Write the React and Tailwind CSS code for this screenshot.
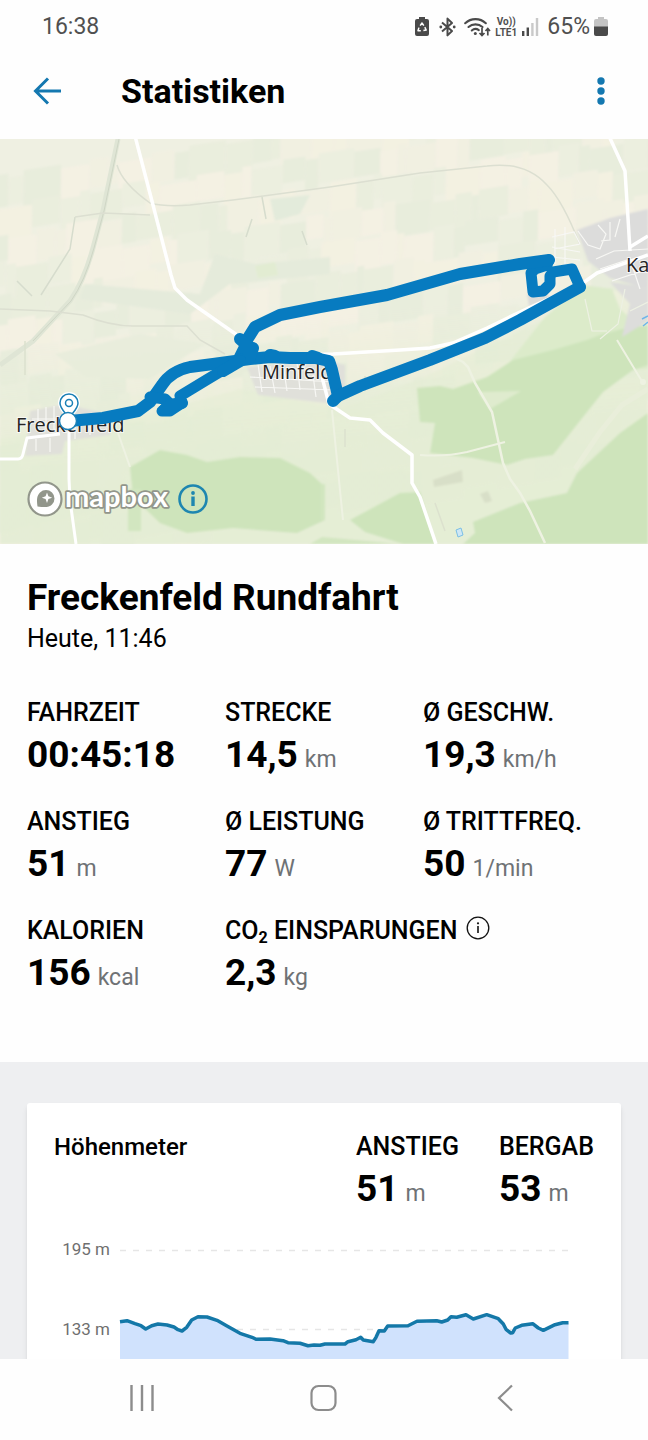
import { useId } from 'react'

const STATS = [
  { label: 'FAHRZEIT', value: '00:45:18' },
  { label: 'STRECKE', value: '14,5', unit: 'km' },
  { label: 'Ø GESCHW.', value: '19,3', unit: 'km/h' },
  { label: 'ANSTIEG', value: '51', unit: 'm' },
  { label: 'Ø LEISTUNG', value: '77', unit: 'W' },
  { label: 'Ø TRITTFREQ.', value: '50', unit: '1/min' },
  { label: 'KALORIEN', value: '156', unit: 'kcal' },
]

// [x, y] in chart units
const ELEVATION = [
  [66, 85.7], [73, 84.7], [81, 87.7], [87, 89.7], [91.7, 93], [97.7, 89.7], [104, 88], [113, 89], [120, 91],
  [124, 93.7], [128, 95], [132.7, 91.3], [137.7, 84], [144, 80.7], [153, 81], [163, 84.3], [173, 90], [186, 97.3],
  [198, 101.3], [202, 103.3], [216, 103], [229, 104.7], [234, 106.7], [246, 107.3], [254, 109.7], [260, 109],
  [266, 109.3], [271, 108], [291, 108], [294, 105.7], [302, 103.7], [306.7, 101.3], [309.3, 104], [319.3, 105.7],
  [322, 101.3], [325, 94.7], [330.3, 95], [333.7, 90], [354, 89.7], [363, 85.3], [382.7, 84.7], [387.7, 86],
  [393.7, 84], [397, 80.7], [402.7, 81.3], [412, 78.7], [419.3, 83], [432.7, 78.7], [444.3, 82.7], [449.3, 88],
  [452, 93.3], [456.7, 97], [458.7, 96.7], [461.3, 92], [467.7, 89.3], [478.7, 87.7], [484.3, 92], [489.3, 94.3],
  [501, 88.7], [508.7, 86.7], [514.5, 86.7],
]

export default function App() {
  return (
    <div className="flex h-screen flex-col bg-[#fefefe] font-[Roboto,'Liberation_Sans',sans-serif] text-black">
      <StatusBar />
      <TopBar />
      <main className="min-h-0 flex-1 overflow-y-auto [scrollbar-width:none]">
        <RouteMap />
        <Summary />
        <section className="bg-[#eeeff1] px-[27px] pt-[41px]">
          <ElevationCard />
        </section>
      </main>
      <NavBar />
    </div>
  )
}

function StatusBar() {
  return (
    <div className="flex h-[54px] shrink-0 items-center justify-between pl-[42px] pr-[40px] text-[23px] text-[#505050]">
      <span>16:38</span>
      <div className="flex items-center">
        <svg width="14" height="20" viewBox="0 0 14 20" className="mr-[10px]">
          <path d="M4 0h6v2h2a2 2 0 0 1 2 2v13a2 2 0 0 1-2 2H2a2 2 0 0 1-2-2V4a2 2 0 0 1 2-2h2z" fill="#4a4a4a" />
          <path d="M5.2 8.6 7 6l1.8 2.6M9.8 10.2l1.4 2.8-2.8.6M5.8 13.8H3l.9-3.2" fill="none" stroke="#fff" strokeWidth="1.5" strokeLinejoin="round" />
        </svg>
        <svg width="17" height="20" viewBox="0 0 17 20" className="mr-[8px]">
          <path d="M3 5.4 13 14l-4.5 4.4V1.6L13 6 3 14.6" fill="none" stroke="#4a4a4a" strokeWidth="2" strokeLinejoin="round" />
          <circle cx="1.8" cy="10" r="1.4" fill="#4a4a4a" />
          <circle cx="15.2" cy="10" r="1.4" fill="#4a4a4a" />
        </svg>
        <svg width="27" height="20" viewBox="0 0 27 20" className="mr-[3px]">
          <g fill="none" stroke="#4a4a4a" strokeWidth="2.1" strokeLinecap="round">
            <path d="M1.2 6.2a15 15 0 0 1 20.6 0" />
            <path d="M4.5 10a10.5 10.5 0 0 1 14 0" />
            <path d="M7.8 13.5a5.5 5.5 0 0 1 7-.4" />
          </g>
          <circle cx="11.3" cy="16.5" r="1.5" fill="#4a4a4a" />
          <path d="M18 11v7.5M15.5 16l2.5 2.5 2.5-2.5M23.8 18.5V11.5M21.5 14l2.3-2.5L26 14" fill="none" stroke="#4a4a4a" strokeWidth="1.7" />
        </svg>
        <span className="mr-1 flex w-6 flex-col items-center text-[10px] leading-[11px] font-bold">
          <span>Vo))</span>
          <span>LTE1</span>
        </span>
        <svg width="17" height="20" viewBox="0 0 17 20" className="mr-[8px]">
          <path d="M0 14h2.4v5H0zM4.6 10.5H7V19H4.6z" fill="#4a4a4a" />
          <path d="M9.2 6h2.4v13H9.2zM13.8 1h2.4v18h-2.4z" fill="#c9c9c9" />
        </svg>
        <span className="mr-1">65%</span>
        <svg width="14" height="20" viewBox="0 0 14 20">
          <path d="M4 0h6v2h2a2 2 0 0 1 2 2v6H0V4a2 2 0 0 1 2-2h2z" fill="#c4c4c4" />
          <path d="M0 9.5h14V17a2 2 0 0 1-2 2H2a2 2 0 0 1-2-2z" fill="#4a4a4a" />
        </svg>
      </div>
    </div>
  )
}

function TopBar() {
  return (
    <header className="flex h-[85px] shrink-0 items-center pb-[11px] pl-[33px] pr-[40px]">
      <button aria-label="Zurück" className="mr-[59px]">
        <svg width="29" height="28" viewBox="0 0 29 28" fill="none" stroke="#1478b0" strokeWidth="3">
          <path d="M15 1.5 2.5 14 15 26.5M2.5 14H28" />
        </svg>
      </button>
      <h1 className="flex-1 text-[34px] leading-[40px] font-bold">Statistiken</h1>
      <button aria-label="Menü">
        <svg width="14" height="28" viewBox="0 0 14 28" fill="#1478b0">
          <circle cx="7" cy="4" r="3.7" />
          <circle cx="7" cy="14" r="3.7" />
          <circle cx="7" cy="24" r="3.7" />
        </svg>
      </button>
    </header>
  )
}

// Farm land: slanted strips in a handful of pale tones
const FIELD_COLORS = ['#f7f1e4', '#ebeedf', '#f6f1e2', '#e8eddc', '#f2f0e2', '#e5ecdb']
const FIELDS = []
for (let row = 0; row < 13; row++) {
  let x = -120 + ((row * 37) % 29)
  let n = row * 17
  while (x < 700) {
    const w = 7 + ((n * 53 + row * 11) % 31)
    const h = 24 + ((n * 29) % 17)
    FIELDS.push({ x, y: row * 30 - 20 + ((n * 13) % 9), w, h, fill: FIELD_COLORS[(n * 7 + ((n * n) % 5)) % 6] })
    x += w
    n++
  }
}

function RouteMap() {
  const blur = useId()
  const fade = useId()
  return (
    <section className="relative h-[405px] overflow-hidden" aria-label="Karte">
      <svg viewBox="0 0 648 405" preserveAspectRatio="xMidYMid slice" className="block h-full w-full">
        <defs>
          <filter id={blur}>
            <feGaussianBlur stdDeviation="0.8" />
          </filter>
          <linearGradient id={fade} x1="0" y1="0" x2="0.15" y2="1">
            <stop offset="0.5" stopColor="#e4edd4" stopOpacity="0" />
            <stop offset="0.8" stopColor="#e4edd4" stopOpacity="0.8" />
          </linearGradient>
        </defs>
        <rect width="648" height="405" fill="#eff0e2" />
        <g filter={`url(#${blur})`}>
          <g transform="skewX(-10) rotate(-9 300 200) translate(40 10)" opacity="0.7">
            {FIELDS.map((f, i) => (
              <rect key={i} x={f.x} y={f.y} width={f.w} height={f.h} fill={f.fill} />
            ))}
          </g>
          <path d="M85 145 200 155 215 115 255 125 330 118 330 135 230 145 190 175 80 160z" fill="#e5ebdb" />
          <path d="M255 127 275 123 278 136 258 139z" fill="#e2ecd2" />
          <path d="M270 60 310 56 300 75 275 82z" fill="#e3ebdb" />
          <path d="M55 215 140 195 205 205 150 240 85 238z" fill="#e9eddd" />
          <path d="M0 405V300L150 275 240 250 340 270 420 240 648 130V405z" fill="#e2edcf" opacity="0.4" />
          <rect width="648" height="405" fill={`url(#${fade})`} />
          <path d="M583 146 612 150 620 170 648 195V230L500 235 545 178z" fill="#dcebca" />
          <path d="M417 249 440 247 453 250 487 238 513 221 553 211 587 201 600 196 622 190 648 186V226L633 231 603 253 583 278 553 316 525 320 507 326 473 319 430 314 435 284 420 283z" fill="#cee4bb" />
          <path d="M648 274 620 294 577 334 567 354 520 364 473 383 475 394 463 405H648z" fill="#cee4bb" />
          <path d="M130 328 160 311 187 316 207 323 240 318 280 319 310 334 325 348V381L297 394 233 389 187 394 160 384 133 358z" fill="#cee4bb" />
          <path d="M350 381 400 354 420 353 435 405H403L365 393z" fill="#cee4bb" />
          <path d="M128 350H141V392H128zM325 345h-4v36h4zM310 405 322 398 400 405z" fill="#d2e6c0" />
          <path d="M478 253 521 252 490 270z" fill="#dfebce" />
          <path d="M433 341 462 331 463 343 434 348zM480 355l8-3 4 10-7 2z" fill="#d8dfc8" />
          <path d="M577 91 610 79 648 70V150L610 139 588 122z" fill="#dcdcdb" />
          <path d="M610 143 648 148V182L622 198 630 165z" fill="#dddddb" />
          <path d="M247 228 325 221 345 226 345 255 325 264 258 256z" fill="#e0e0da" />
          <path d="M30 272 65 265 112 276 110 296 65 302 62 315 25 317 28 292z" fill="#e0e0da" />
          <path d="M527 155h18l8 4-24 8z" fill="#dcdcd9" />
        </g>

        {/* Railways and tracks */}
        <g fill="none" stroke="#dcdfd1" strokeWidth="1.5">
          <path d="M118 0 103 72 93 109Q84 142 70 162L33 202 0 226" stroke="#dfe5d5" strokeWidth="5" />
          <path d="M119 0 104 72 94 109Q85 142 71 162L33 202" strokeWidth="1" stroke="#cfd6c5" />
          <path d="M117 26Q122 44 150 64 165 68 190 66L233 61 330 48 420 34 487 27Q525 22 547 46 563 62 580 106" />
          <path d="M0 170 50 172 83 176Q110 187 133 187H187L200 201 225 215" />
          <path d="M262 58 266 80M252 80 246 98M75 78 70 110 41 156M17 142 32 157M302 92l5 14" stroke="#d6dccd" />
          <path d="M75 78 103 74 150 76" />
          <path d="M25 202V236M435 364 445 392M365 237v15M345 290v18" stroke="#dce1ce" />
        </g>

        {/* Village streets */}
        <g fill="none" stroke="#f7f7f4" strokeWidth="1.2">
          <path d="M578 92 588 106 600 110 606 95 598 86M610 83v18l-9 1M620 80l-5 18M552 98l22-5 6 12-26 5M552 108l28 5M552 118l28 3M555 90v35M565 88v38M596 120l18-8 34-2M600 130l30-10 10 30M648 130l-36 12" />
          <path d="M258 225l4 28M270 227l5 27M283 225l4 27M297 223l3 28M313 236l3 22M250 238l85 5M255 248l80 3" />
          <path d="M38 270v20M46 268v22M54 267v23M32 280h50M75 285v15M90 282v14M36 300v12M50 299v14" />
          <path d="M585 160 592 192 607 192M625 150 618 185 600 200M648 163 630 172" stroke="#edf1e3" />
        </g>

        {/* Side roads */}
        <g fill="none" stroke="#eef2e2" strokeWidth="2.5">
          <path d="M455 219 463 223 468 228 475 244 492 273 503 324 510 340 520 354 530 372 545 404" />
          <path d="M420 316Q445 318 467 313L505 303M617 201 643 244M332 271 343 381M118 294 130 328" strokeWidth="2" />
          <path d="M648 250 622 266 600 293 575 330" stroke="#e9eeda" strokeWidth="5" />
          <circle cx="643" cy="243" r="3" fill="#eef2e2" stroke="none" />
        </g>

        {/* Main roads */}
        <g fill="none" stroke="#fff" strokeWidth="3.5" strokeLinejoin="round">
          <path d="M135 -3 153 66 171 136 175 149 187 161 237 196" />
          <path d="M609 -3 625 32 628 79 630 112" />
          <path d="M648 97 630 108M648 116 597 134 583 144 520 173 487 189 453 204 430 209 400 211 333 215 250 218" />
          <path d="M322 238 329 265 350 279 370 281 383 294 412 316V344L420 358 436 405" />
          <path d="M0 320H18Q22 320 23 315L27 299 60 295M69 285V340L70 361 76 405" strokeWidth="3" />
        </g>
        <path d="M456 391 461 389 463 396 458 398z" fill="#cfe7f5" stroke="#7cbfe6" />
        <path d="M642 180l6-3M643 187l5-4" stroke="#6db5ea" strokeWidth="1.5" />

        <g fontFamily="'Open Sans', Roboto, sans-serif" fontSize="20" fill="#242424" stroke="#fff" strokeOpacity="0.7" strokeWidth="2" style={{ paintOrder: 'stroke' }}>
          <text x="16" y="293">Freckenfeld</text>
          <text x="262" y="240">Minfeld</text>
          <text x="626" y="133">Ka</text>
        </g>

        <g fill="none" stroke="#077bc0" strokeWidth="11" strokeLinecap="round" strokeLinejoin="round">
          <path d="M69 282 103 279 138 272 150 263 162 246Q171 232 190 228L213 225 250 220 270 218 290 219 315 219 329 222 332 231 335 244 338 257 333 262" strokeWidth="12" />
          <path d="M338 257 360 247 430 221 485 199 520 181 580 148" strokeWidth="12" />
          <path d="M580 148 572 130 553 133 550 137 550 145 543 152 533 153 531 134 535 130 547 126 549 121" />
          <path d="M549 121 520 125 460 135 387 156 320 168 280 176 255 188 245 204" strokeWidth="12" />
          <path d="M240 200 249 208 253 209 250 218 240 218 246 206" strokeWidth="12" />
          <path d="M240 220 223 231 208 240 180 257 182 264 170 272 162 272 171 266 165 260 150 258" />
          <path d="M182 264 170 266 165 270M223 232 240 222M270 216 275 217M312 217 318 219" strokeWidth="12" />
        </g>

        {/* Destination pin and current position */}
        <path d="M69 279C66 274 60 270 60 264A9 9 0 0 1 78 264C78 270 72 274 69 279Z" fill="#fff" stroke="#fff" strokeWidth="4" />
        <path d="M69 279C66 274 60 270 60 264A9 9 0 0 1 78 264C78 270 72 274 69 279Z" fill="#fff" stroke="#1a7fb5" strokeWidth="1.5" />
        <circle cx="69" cy="264" r="3.5" fill="#fff" stroke="#1a7fb5" strokeWidth="1.5" />
        <circle cx="68" cy="282" r="8.5" fill="#fff" stroke="#1a7fb5" strokeWidth="1.5" />
      </svg>

      <div className="absolute bottom-[22px] left-[26px] flex items-center gap-1">
        <a href="#mapbox" aria-label="mapbox">
          <svg width="148" height="46" viewBox="0 -4 148 46">
            <circle cx="19" cy="19" r="16.5" fill="#fff" stroke="#92968b" strokeWidth="2.2" />
            <path d="M11.5 26.5C10.5 19 11 15.5 14 12.5a8.4 8.4 0 0 1 12 12C23 27.5 19 27.5 11.5 26.5Z" fill="#92968b" />
            <path d="M21 12.5 22.4 16.3 26.2 17.7 22.4 19.1 21 22.9 19.6 19.1 15.8 17.7 19.6 16.3Z" fill="#fff" />
            <text x="39" y="27" fontFamily="Lato, sans-serif" fontWeight="700" fontSize="29" fill="#fff" stroke="#92968b" strokeWidth="3.5" strokeLinejoin="round" style={{ paintOrder: 'stroke' }}>
              mapbox
            </text>
          </svg>
        </a>
        <button aria-label="Karteninformationen">
          <svg width="30" height="30" viewBox="0 0 30 30">
            <circle cx="15" cy="15" r="13.5" fill="none" stroke="#1e86b0" strokeWidth="2.6" />
            <path d="M13.3 12.5h3.4V22h-3.4z" fill="#1e86b0" />
            <circle cx="15" cy="9" r="1.9" fill="#1e86b0" />
          </svg>
        </button>
      </div>
    </section>
  )
}

function Summary() {
  return (
    <section className="px-[27px] pt-8 pb-[67px]">
      <h2 className="text-[37px] leading-[44px] font-bold">Freckenfeld Rundfahrt</h2>
      <p className="text-[25px] leading-[38px]">Heute, 11:46</p>
      <div className="mt-10 grid grid-cols-3 gap-y-[30px]">
        {STATS.map((s) => (
          <Stat key={s.label} {...s} />
        ))}
        <div className="col-span-2">
          <div className="flex items-start gap-[9px]">
            <div className="text-[25px] leading-[30px] font-medium">
              CO<sub className="text-base leading-none font-bold">2</sub> EINSPARUNGEN
            </div>
            <button aria-label="Info">
              <svg width="24" height="24" viewBox="0 0 24 24">
                <circle cx="12" cy="12" r="10.8" fill="none" stroke="#111" strokeWidth="1.3" />
                <path d="M12 10v7" stroke="#111" strokeWidth="1.6" />
                <circle cx="12" cy="7.3" r="1.1" fill="#111" />
              </svg>
            </button>
          </div>
          <Value value="2,3" unit="kg" />
        </div>
      </div>
    </section>
  )
}

function Stat({ label, value, unit }) {
  return (
    <div>
      <div className="text-[25px] leading-[30px] font-medium whitespace-nowrap">{label}</div>
      <Value value={value} unit={unit} />
    </div>
  )
}

function Value({ value, unit }) {
  return (
    <div className="mt-[5px] text-[37px] leading-[44px] font-bold whitespace-nowrap">
      {value}
      {unit && <span className="ml-[7px] text-[23px] leading-none font-normal text-[#6f7275]">{unit}</span>}
    </div>
  )
}

function ElevationCard() {
  const line = ELEVATION.map((p) => p.join(' ')).join('L')
  return (
    <div className="rounded-[3px] bg-white px-[27px] pt-[29px] pb-8 shadow-md">
      <div className="flex">
        <h3 className="flex-1 text-2xl leading-[30px] font-medium">Höhenmeter</h3>
        <div className="flex gap-10">
          <Stat label="ANSTIEG" value="51" unit="m" />
          <Stat label="BERGAB" value="53" unit="m" />
        </div>
      </div>
      <svg viewBox="0 0 540 200" className="mt-[25px] block w-full" role="img" aria-label="Höhenprofil">
        <path d="M66 14.5H515M66 93.5H515" stroke="#e6e6e6" strokeWidth="1.5" strokeDasharray="6 7" />
        <path d={`M66 200V85.7L${line}V200z`} fill="#d0e2fd" />
        <path d={`M${line}`} fill="none" stroke="#1478a8" strokeWidth="3.5" strokeLinejoin="round" />
        <g fill="#6f6f6f" fontSize="17" textAnchor="end">
          <text x="56" y="19">195 m</text>
          <text x="56" y="99">133 m</text>
        </g>
      </svg>
    </div>
  )
}

function NavBar() {
  return (
    <nav className="flex h-[81px] shrink-0 items-center justify-between bg-[#fefefe] px-[127px] pb-[3px]">
      <button aria-label="Letzte Apps">
        <svg width="30" height="28" viewBox="0 0 30 28" stroke="#8c8c8c" strokeWidth="2.4">
          <path d="M4.5 1v26M15 1v26M25.5 1v26" />
        </svg>
      </button>
      <button aria-label="Startseite">
        <svg width="30" height="28" viewBox="0 0 30 28">
          <rect x="2.5" y="2" width="24" height="24" rx="7" fill="none" stroke="#8c8c8c" strokeWidth="2.2" />
        </svg>
      </button>
      <button aria-label="Zurück">
        <svg width="30" height="28" viewBox="0 0 30 28" fill="none" stroke="#8c8c8c" strokeWidth="2.2">
          <path d="M21 1.5 8 14l13 12.5" />
        </svg>
      </button>
    </nav>
  )
}
